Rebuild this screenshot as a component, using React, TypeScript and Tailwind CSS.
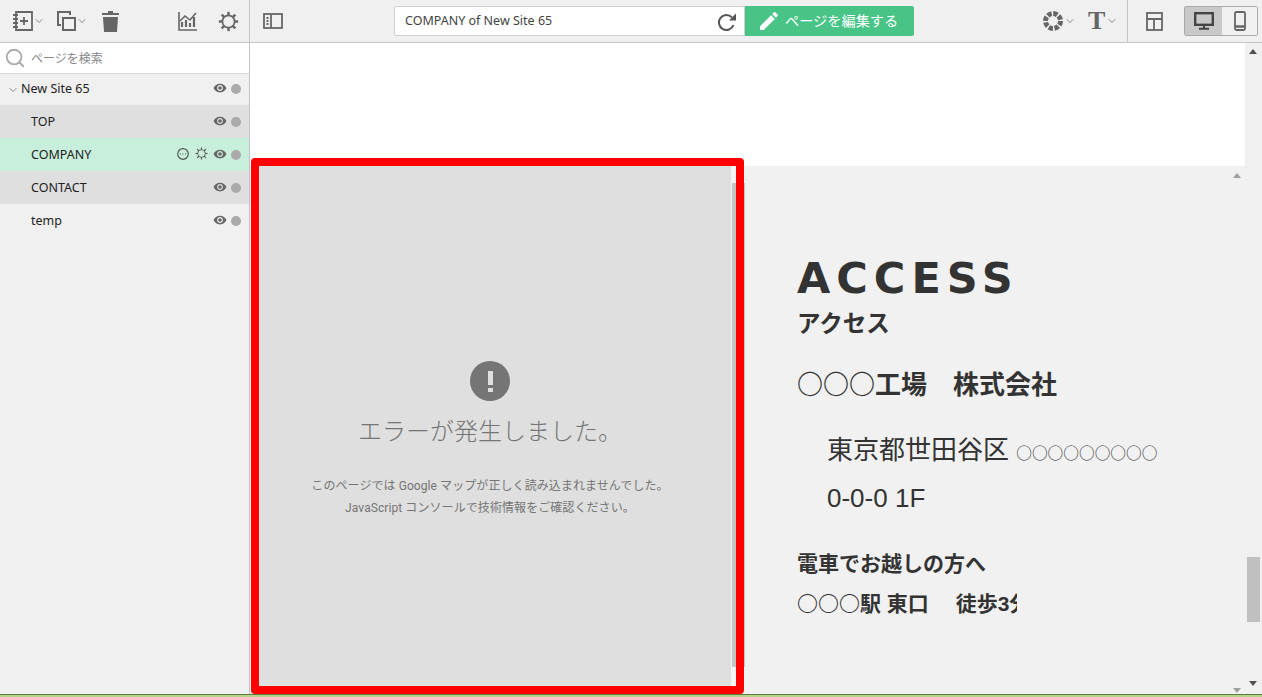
import { ChevronDown, Search } from 'lucide-react';
import { MdCreate, MdVisibility } from 'react-icons/md';

const uiFont = "font-['Noto_Sans','Noto_Sans_CJK_JP',sans-serif]";
const cjkFont = "font-['Liberation_Sans','Noto_Sans_CJK_JP',sans-serif]";
const circleFont = "font-['Noto_Sans_CJK_JP',sans-serif]";

const pages = [
  { name: 'TOP', bg: 'bg-[#dfdfdf]' },
  { name: 'COMPANY', bg: 'bg-[#c8efdc]', active: true },
  { name: 'CONTACT', bg: 'bg-[#dfdfdf]' },
  { name: 'temp', bg: 'bg-[#f0f0f0]' },
];

function Gear({ size, width = 2 }: { size: number; width?: number }) {
  const teeth = [0, 45, 90, 135, 180, 225, 270, 315];
  return (
    <svg width={size} height={size} viewBox="0 0 24 24" fill="none" stroke="currentColor">
      <circle cx="12" cy="12" r="7" strokeWidth={width} />
      {teeth.map((a) => (
        <line key={a} x1="12" y1="1" x2="12" y2="5" strokeWidth={width + 0.8} transform={`rotate(${a} 12 12)`} />
      ))}
    </svg>
  );
}

function Chevron({ className = '' }: { className?: string }) {
  return <ChevronDown size={12} strokeWidth={1.5} className={`text-[#666] ${className}`} />;
}

function RowStatus() {
  return (
    <>
      <MdVisibility size={14} className="-translate-y-px text-[#666]" />
      <span className="ml-[4px] h-[10px] w-[10px] rounded-full bg-[#aaaaaa]" />
    </>
  );
}

function Toolbar() {
  return (
    <div className="flex h-[43px] shrink-0 items-center border-b border-[#c4c4c4] bg-[#f0f0f0] text-[#666]">
      <div className="flex h-full w-[250px] shrink-0 items-center border-r border-[#c4c4c4]">
        <svg className="ml-[13px]" width="20" height="20" viewBox="0 0 20 20" fill="none" stroke="currentColor" strokeWidth="1.8">
          <path d="M3 1h16v18H3z" />
          <path d="M0 4h5M0 8h5M0 12h5M0 16h5M7 10h8M11 6v8" />
        </svg>
        <Chevron />
        <svg className="ml-[12px]" width="19" height="20" viewBox="0 0 19 20" fill="none" stroke="currentColor" strokeWidth="2">
          <path d="M4 14H1V1h12v3" />
          <path d="M6 7h12v12H6z" />
        </svg>
        <Chevron />
        <svg className="ml-[14px]" width="17" height="21" viewBox="0 0 17 21" fill="currentColor">
          <path d="M6 0h5v2h6v2H0V2h6z" />
          <path d="M1 6h15l-1 15H2z" />
        </svg>
        <svg className="ml-[59px]" width="20" height="20" viewBox="0 0 20 20" fill="none" stroke="currentColor" strokeWidth="1.6">
          <path d="M1 1v18h18" />
          <path d="M4 16v-5M8 16V9M12 16v-4M16 16V6" strokeWidth="2.2" />
          <path d="M2 10l5-5 5 4 6-7" />
        </svg>
        <span className="ml-[20px]">
          <Gear size={21} />
        </span>
      </div>
      <svg className="ml-[13px]" width="20" height="16" viewBox="0 0 20 16" fill="none" stroke="currentColor" strokeWidth="1.8">
        <rect x="1" y="1" width="18" height="14" />
        <path d="M8 1v14M3.5 5h2M3.5 8h2M3.5 11h2" />
      </svg>
      <div className="ml-[111px] flex h-[30px] w-[351px] items-center justify-between rounded-l-[2px] border border-[#d0d0d0] bg-white pl-[10px] pr-[7px]">
        <span className={`mt-[1px] ${uiFont} text-[12.5px] text-[#444]`}>COMPANY of New Site 65</span>
        <svg className="mt-[2px]" width="20" height="20" viewBox="0 0 20 20" fill="none" stroke="#555" strokeWidth="2">
          <path d="M16.5 13a7.5 7.5 0 1 1-1.6-7.6" />
          <path d="M19 1.500v7h-7z" fill="#555" stroke="none" />
        </svg>
      </div>
      <div className={`flex h-[30px] w-[169px] items-center rounded-r-[2px] bg-[#47c486] pl-[12px] text-white ${uiFont}`}>
        <MdCreate size={24} />
        <span className="ml-[4px] text-[14.2px]">ページを編集する</span>
      </div>
      <svg className="ml-[128px]" width="22" height="22" viewBox="0 0 22 22" fill="none" stroke="currentColor">
        <circle cx="11" cy="11" r="7.500" strokeWidth="5" strokeDasharray="4.300 1.590" />
      </svg>
      <Chevron />
      <span className="ml-[12px] font-['Liberation_Serif',serif] text-[26px] leading-none font-bold">T</span>
      <Chevron className="ml-[1px]" />
      <span className="ml-[9px] h-full w-px bg-[#c4c4c4]" />
      <svg className="ml-[18px]" width="17" height="19" viewBox="0 0 17 19" fill="none" stroke="currentColor" strokeWidth="1.8">
        <rect x="1" y="1" width="15" height="17" />
        <path d="M1 7h15M8 7v11" />
      </svg>
      <div className="ml-[21px] flex h-[30px] w-[74px] overflow-hidden rounded-[2px] border border-[#aaa]">
        <div className="flex w-[37px] items-center justify-center bg-[#c8c8c8] text-[#444]">
          <svg width="20" height="18" viewBox="0 0 20 18" fill="none" stroke="currentColor" strokeWidth="2.4">
            <rect x="1.200" y="1.200" width="17.600" height="11.600" />
            <path d="M10 13v3M5 16.800h10" strokeWidth="2" />
          </svg>
        </div>
        <div className="flex flex-1 items-center justify-center bg-[#f0f0f0]">
          <svg width="12" height="20" viewBox="0 0 12 20" fill="none" stroke="currentColor" strokeWidth="1.8">
            <rect x="1" y="1" width="10" height="18" rx="1.500" />
            <path d="M1 15.500h10" strokeWidth="2.500" />
          </svg>
        </div>
      </div>
    </div>
  );
}

function Sidebar() {
  return (
    <div className={`flex w-[250px] shrink-0 flex-col border-r border-[#c4c4c4] bg-[#f0f0f0] text-[12.5px] text-[#222] ${uiFont}`}>
      <div className="flex h-[31px] shrink-0 items-center border-b border-[#d8d8d8] bg-white pl-[4px]">
        <Search size={22} strokeWidth={2} className="text-[#aaa]" />
        <span className="mt-[2px] ml-[5px] text-[12px] text-[#888]">ページを検索</span>
      </div>
      <div className="flex h-[31px] shrink-0 items-center pl-[7px] pr-[8px]">
        <ChevronDown size={12} strokeWidth={1.5} className="text-[#666]" />
        <span className="ml-[2px] flex-1">New Site 65</span>
        <span className="flex -translate-y-px items-center">
          <RowStatus />
        </span>
      </div>
      {pages.map((p) => (
        <div key={p.name} className={`flex h-[33px] shrink-0 items-center pl-[31px] pr-[8px] pt-[2px] ${p.bg}`}>
          <span className="flex-1">{p.name}</span>
          <span className="flex -translate-y-px items-center text-[#555]">
            {p.active && (
              <>
                <svg width="12" height="12" viewBox="0 0 12 12" fill="none" stroke="currentColor" strokeWidth="1.200" className="mr-[6px] -translate-y-px">
                  <circle cx="6" cy="6" r="5.300" />
                  <path d="M3 6h1M5.500 6h1M8 6h1" />
                </svg>
                <span className="mr-[5px] -translate-y-px">
                  <Gear size={13} width={1.500} />
                </span>
              </>
            )}
            <RowStatus />
          </span>
        </div>
      ))}
    </div>
  );
}

function MapError() {
  return (
    <div className="flex w-[480px] shrink-0 flex-col items-center bg-[#dfdfdf] pr-[2px] pt-[195px] text-[#757575]">
      <div className="flex h-[40px] w-[40px] flex-col items-center justify-center rounded-full bg-[#757575]">
        <span className="h-[14px] w-[5px] bg-[#dfdfdf]" />
        <span className="mt-[3px] h-[4px] w-[5px] bg-[#dfdfdf]" />
      </div>
      <p className="mt-[15px] font-['Roboto','Noto_Sans_CJK_JP',sans-serif] text-[24px] leading-[32px] font-light">
        エラーが発生しました。
      </p>
      <p className="mt-[27px] text-center font-['Roboto','Noto_Sans_CJK_JP',sans-serif] text-[12px] leading-[22px] tracking-[0.08px]">
        このページでは Google マップが正しく読み込まれませんでした。
        <br />
        JavaScript コンソールで技術情報をご確認ください。
      </p>
    </div>
  );
}

function Access() {
  return (
    <div className={`flex-1 bg-[#f1f1f1] pl-[52px] pt-[82px] text-[#333] ${cjkFont}`}>
      <h1 className="font-['DejaVu_Sans',sans-serif] text-[43px] leading-[60px] font-bold tracking-[6px]">ACCESS</h1>
      <h2 className="mt-[1px] text-[23.5px] leading-[30px] font-bold">アクセス</h2>
      <p className="mt-[24px] h-[40px] text-[26px] leading-[40px] font-bold">
        <span className={circleFont}>○○○</span>工場　株式会社
      </p>
      <div className="mt-[22px] pl-[30px] text-[26px] leading-[50px]">
        <p className="h-[48px]">
          東京都世田谷区 <span className={`${circleFont} text-[15.7px] leading-none`}>○○○○○○○○○</span>
        </p>
        <p className="h-[50px]">0-0-0 1F</p>
      </div>
      <p className="mt-[21px] text-[21px] leading-[39px] font-bold">電車でお越しの方へ</p>
      <p className="h-[39px] w-[220px] overflow-hidden whitespace-nowrap text-[21px] leading-[39px] font-bold">
        <span className={circleFont}>○○○</span>駅 東口　 徒歩3分
      </p>
    </div>
  );
}

export default function App() {
  return (
    <div className="flex h-[697px] w-[1262px] flex-col overflow-hidden bg-[#f0f0f0]">
      <Toolbar />
      <div className="flex min-h-0 flex-1">
        <Sidebar />
        <div className="relative flex min-w-0 flex-1 flex-col">
          <div className="h-[123px] w-[995px] shrink-0 bg-white" />
          <div className="flex min-h-0 w-[995px] flex-1 pl-[1px]">
            <MapError />
            <div className="w-[14px] shrink-0 bg-[#f4f4f4] pt-[17px]">
              <div className="ml-[1px] h-[484px] w-[13px] bg-[#c4c4c4]" />
            </div>
            <Access />
            <div className="flex w-[14px] shrink-0 flex-col items-center justify-between bg-[#f1f1f1] pt-[7px] pr-[3px] pb-[1px] text-[#a0a0a0]">
              <span className="h-0 w-0 border-x-[4px] border-b-[5px] border-x-transparent border-b-current" />
              <span className="h-0 w-0 border-x-[4px] border-t-[5px] border-x-transparent border-t-current" />
            </div>
          </div>
          {/* outer scrollbar */}
          <div className="absolute top-0 right-0 bottom-0 w-[17px] bg-[#f0f0f0] text-[#505050]">
            <span className="absolute top-[6px] left-[4px] h-0 w-0 border-x-[4px] border-b-[5px] border-x-transparent border-b-current" />
            <div className="absolute top-[514px] left-[2px] h-[65px] w-[13px] bg-[#c0c0c0]" />
            <span className="absolute bottom-[8px] left-[4px] h-0 w-0 border-x-[4px] border-t-[5px] border-x-transparent border-t-current" />
          </div>
          {/* red highlight around the map */}
          <div className="pointer-events-none absolute top-[115px] left-[1px] h-[536px] w-[493px] rounded-[4px] border-[8px] border-[#ff0000]" />
        </div>
      </div>
      <div className="h-[3px] shrink-0 border-t border-[#5d7a45] bg-[#b5d488]" />
    </div>
  );
}
